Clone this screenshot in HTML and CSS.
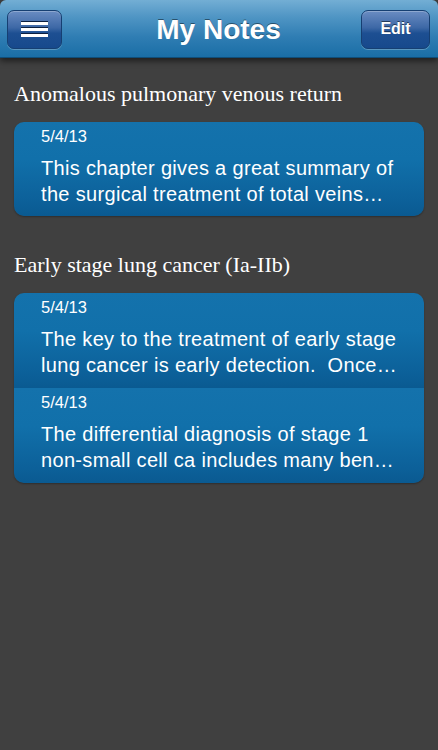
FILE: index.html
```html
<!DOCTYPE html>
<html>
<head>
<meta charset="utf-8">
<link rel="stylesheet" href="styles.css">
</head>
<body>
<header class="bar">
  <button class="btn menu" aria-label="Menu">
    <span class="line"></span><span class="line"></span><span class="line"></span>
  </button>
  <h1 class="title">My Notes</h1>
  <button class="btn edit">Edit</button>
</header>
<main class="content">
  <section class="group">
    <h2 class="group-title">Anomalous pulmonary venous return</h2>
    <div class="card">
      <div class="row">
        <div class="date">5/4/13</div>
        <div class="text">This chapter gives a great summary of<br>the surgical treatment of total veins…</div>
      </div>
    </div>
  </section>
  <section class="group">
    <h2 class="group-title">Early stage lung cancer (Ia-IIb)</h2>
    <div class="card">
      <div class="row">
        <div class="date">5/4/13</div>
        <div class="text">The key to the treatment of early stage<br>lung cancer is early detection.&nbsp; Once…</div>
      </div>
      <div class="row">
        <div class="date">5/4/13</div>
        <div class="text">The differential diagnosis of stage 1<br>non-small cell ca includes many ben…</div>
      </div>
    </div>
  </section>
</main>
</body>
</html>
```
FILE: styles.css
```css
html, body {
  margin: 0;
  padding: 0;
}
body {
  background: #404040;
  width: 438px;
  height: 750px;
  overflow: hidden;
  font-family: "Liberation Sans", Arial, sans-serif;
}
.bar {
  position: relative;
  z-index: 1;
  height: 58px;
  box-sizing: border-box;
  display: grid;
  grid-template-columns: 1fr auto 1fr;
  align-items: center;
  padding: 0 8px 0 7px;
  border-radius: 6px 6px 0 0;
  background: linear-gradient(#73aed4 0%, #4f95c4 30%, #2f7db3 65%, #1a6ea6 100%);
  border-bottom: 1px solid #0f4e7a;
  box-shadow: 0 3px 6px rgba(0,0,0,0.55);
}
.btn {
  height: 39px;
  box-sizing: border-box;
  border: 1px solid #163f72;
  border-radius: 7px;
  background: linear-gradient(#6a8cc2 0%, #3d68a6 45%, #1d4f92 60%, #17498c 100%);
  box-shadow: inset 0 1px 0 rgba(255,255,255,0.25), 0 1px 0 rgba(255,255,255,0.25);
  color: #fff;
  padding: 0;
  margin-top: 1px;
}
.menu {
  justify-self: start;
  width: 55px;
  display: flex;
  flex-direction: column;
  align-items: center;
  justify-content: center;
  gap: 3px;
}
.line {
  display: block;
  width: 27px;
  height: 3px;
  background: #fff;
  box-shadow: 0 -1px 0 #0b1f40;
}
.edit {
  justify-self: end;
  width: 69px;
  font-family: "Liberation Sans", Arial, sans-serif;
  font-weight: bold;
  font-size: 16px;
  text-shadow: 0 -1px 0 rgba(0,0,0,0.5);
}
.title {
  margin: 0;
  font-size: 28px;
  font-weight: bold;
  color: #fff;
  text-shadow: 0 -1px 0 rgba(0,0,0,0.45);
  margin-top: 2px;
}
.content {
  padding: 24px 14px 0 14px;
}
.group + .group {
  margin-top: 37px;
}
.group-title {
  margin: 0 0 16px 0;
  font-family: "Liberation Serif", "Times New Roman", serif;
  font-weight: normal;
  font-size: 22px;
  line-height: 24px;
  color: #fff;
}
.card {
  border-radius: 10px;
  overflow: hidden;
  box-shadow: 0 1px 2px rgba(0,0,0,0.3);
}
.row {
  height: 95px;
  box-sizing: border-box;
  padding: 5px 10px 0 27px;
  background: linear-gradient(#1472ac 0%, #1170aa 40%, #0c6099 85%, #0a5a91 100%);
  color: #fff;
  white-space: nowrap;
}
.card .row:first-child:last-child {
  height: 94px;
}
.date {
  font-size: 16.5px;
  line-height: 18px;
}
.text {
  margin-top: 10px;
  font-size: 20px;
  letter-spacing: 0.33px;
  line-height: 26px;
}
```
